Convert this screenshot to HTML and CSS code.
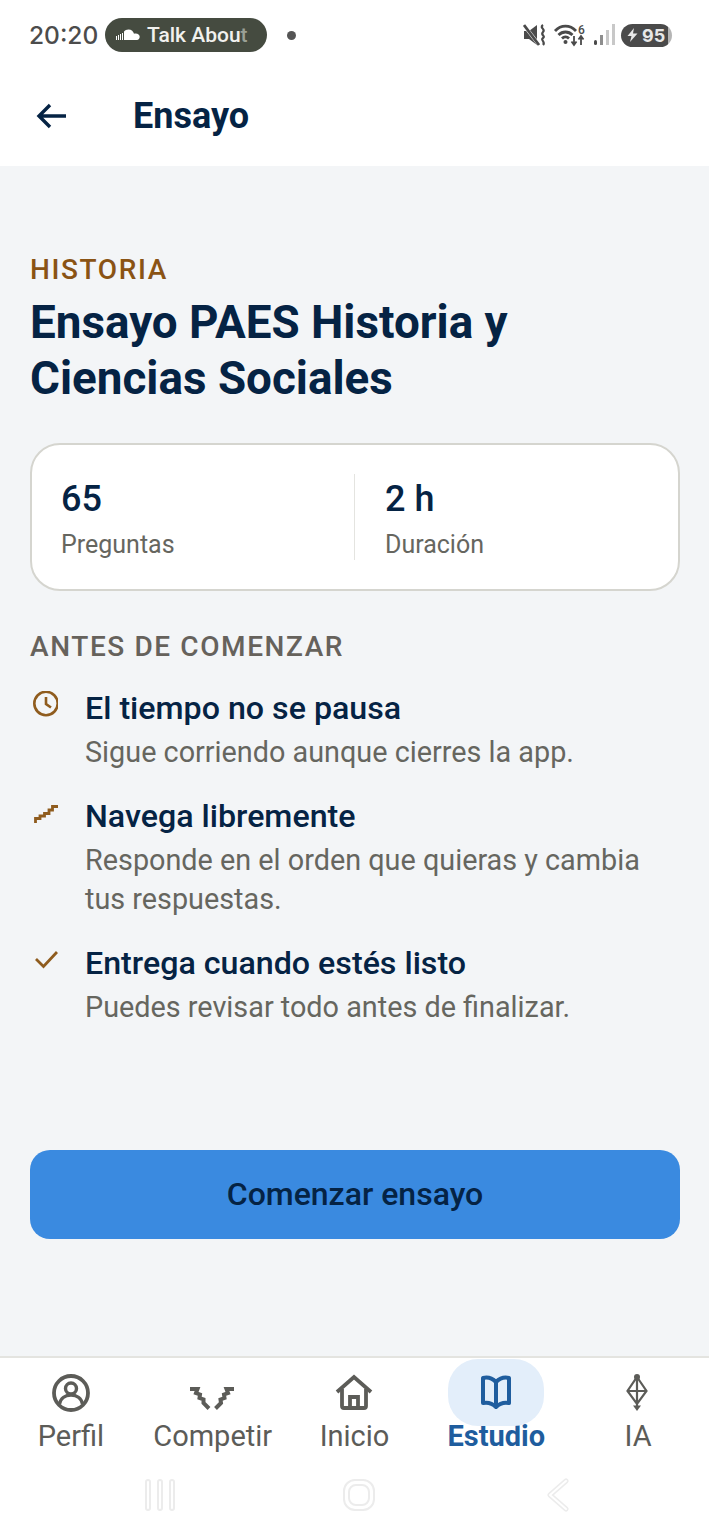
FILE: index.html
```html
<!DOCTYPE html>
<html lang="es">
<head>
<meta charset="utf-8">
<title>Ensayo</title>
<link rel="stylesheet" href="styles.css">
</head>
<body>
<div class="screen">
  <div class="statusbar">
    <div class="status-left">
      <span class="clock">20:20</span>
      <span class="pill">
        <svg class="sc-icon" viewBox="0 0 26 12"><g fill="none" stroke="#fff" stroke-width="1"><path d="M1.500 7v4M3.500 6v5M5.500 5v6M7.500 4v7"/></g><path d="M9 11V2.500C10 1.200 11.500.5 13.500.5c3 0 5 2 5.500 4.300.5-.3 1-.4 1.700-.4 2.300 0 4 1.500 4 3.300S23.500 11 22 11z" fill="#fff"/></svg>
        <span class="pill-text">Talk Abou<span class="fade">t</span></span>
      </span>
      <span class="dot"></span>
    </div>
    <div class="status-right">
      <svg class="st-mute" viewBox="0 0 24 24"><path d="M1 8h5l8-6v20l-8-6H1z" fill="#4a4a4a"/><path d="M0 1l17 22" stroke="#fff" stroke-width="3.600"/><path d="M1 2l15 20" stroke="#4a4a4a" stroke-width="2.800"/><path d="M20 2c-4 3 3 4 0 7s3 4 0 6 3 4 0 7" fill="none" stroke="#4a4a4a" stroke-width="2.200"/></svg>
      <svg class="st-wifi" viewBox="0 0 32 24"><g fill="none" stroke="#4a4a4a" stroke-width="2.800"><path d="M1 8c6-6.500 15-6.500 21 0"/><path d="M4.500 12c4-4 10-4 14 0"/><path d="M8 15.500c2-2 5-2 7 0"/></g><circle cx="11.500" cy="19" r="2" fill="#4a4a4a"/><path d="M20 13v9M17.500 18.500l2.500 3.500 2.500-3.500M27 22v-9M24.500 16.500l2.500-3.500 2.500 3.500" fill="none" stroke="#4a4a4a" stroke-width="1.800"/><text x="24" y="11" class="st-six">6</text></svg>
      <svg class="st-signal" viewBox="0 0 22 24"><rect x="1" y="17" width="3" height="5" rx="1.500" fill="#4a4a4a"/><rect x="7" y="12" width="3" height="10" fill="#8e8e8e"/><rect x="13" y="7" width="3" height="15" fill="#c8c8c8"/><rect x="19" y="1" width="3" height="21" fill="#c8c8c8"/></svg>
      <span class="battery">
        <svg class="bolt" viewBox="0 0 10 14"><path d="M6.500 0L0 8h4l-1.500 6L10 5.500H5.500z" fill="#e8e8e8"/></svg>
        <span class="batt-num">95</span>
      </span>
    </div>
  </div>

  <header class="appbar">
    <svg class="back" viewBox="0 0 32 28"><path d="M30 14H3M14 3L3 14l11 11" fill="none" stroke="#052344" stroke-width="3.400"/></svg>
    <h1 class="appbar-title">Ensayo</h1>
  </header>

  <main class="main">
    <div class="eyebrow">HISTORIA</div>
    <h2 class="title">Ensayo PAES Historia y Ciencias Sociales</h2>
    <section class="card">
      <div class="stat">
        <div class="stat-num">65</div>
        <div class="stat-label">Preguntas</div>
      </div>
      <div class="stat stat-second">
        <div class="stat-num">2 h</div>
        <div class="stat-label">Duración</div>
      </div>
    </section>
    <div class="section-label">ANTES DE COMENZAR</div>
    <ul class="rules">
      <li class="rule">
        <svg class="rule-icon" viewBox="0 0 28 28"><circle cx="16" cy="12.500" r="11.700" fill="none" stroke="#8f5c1e" stroke-width="2.600"/><path d="M16 6v7l5 3.500" fill="none" stroke="#8f5c1e" stroke-width="2.600"/></svg>
        <div class="rule-body">
          <div class="rule-title">El tiempo no se pausa</div>
          <div class="rule-text">Sigue corriendo aunque cierres la app.</div>
        </div>
      </li>
      <li class="rule">
        <svg class="rule-icon" viewBox="0 0 28 28"><path d="M5.500 24v-4.500H10V17h4.500v-2.500H19V11h3.500V7.500H28" fill="none" stroke="#8f5c1e" stroke-width="2.800"/></svg>
        <div class="rule-body">
          <div class="rule-title">Navega libremente</div>
          <div class="rule-text">Responde en el orden que quieras y cambia tus respuestas.</div>
        </div>
      </li>
      <li class="rule">
        <svg class="rule-icon" viewBox="0 0 28 28"><path d="M6 13l7.500 7.500L27 6" fill="none" stroke="#8f5c1e" stroke-width="2.800"/></svg>
        <div class="rule-body">
          <div class="rule-title">Entrega cuando estés listo</div>
          <div class="rule-text">Puedes revisar todo antes de finalizar.</div>
        </div>
      </li>
    </ul>
    <button class="cta">Comenzar ensayo</button>
  </main>

  <nav class="nav">
    <div class="tabs">
      <div class="tab">
        <span class="tab-icon">
          <svg class="ico" viewBox="0 0 40 40"><circle cx="20" cy="20" r="17" fill="none" stroke="#5c5c58" stroke-width="3.800"/><circle cx="20" cy="15.500" r="5.500" fill="none" stroke="#5c5c58" stroke-width="3.400"/><path d="M8.500 31c1-6 6-9 11.500-9s10.500 3 11.500 9" fill="none" stroke="#5c5c58" stroke-width="3.400"/></svg>
        </span>
        <span class="tab-label">Perfil</span>
      </div>
      <div class="tab">
        <span class="tab-icon">
          <svg class="ico ico-wide" viewBox="0 0 46 40"><g fill="none" stroke="#5c5c58" stroke-width="4"><path d="M0 16h7.500L6 20l4 1.500-.5 3.500 4 1.500L13.500 30l5.500 5.500"/><path d="M44 16h-7.500l1.500 4-4 1.500.5 3.500-4 1.500.5 3.500-5.500 5.500"/></g></svg>
        </span>
        <span class="tab-label">Competir</span>
      </div>
      <div class="tab">
        <span class="tab-icon">
          <svg class="ico" viewBox="0 0 40 40"><path d="M3 19L20 4l17 15" fill="none" stroke="#5c5c58" stroke-width="3.800"/><path d="M8 16v17c0 1.500.5 2 2 2h20c1.500 0 2-.5 2-2V16" fill="none" stroke="#5c5c58" stroke-width="3.800"/><path d="M16 35V24h8v11" fill="none" stroke="#5c5c58" stroke-width="3.800"/></svg>
        </span>
        <span class="tab-label">Inicio</span>
      </div>
      <div class="tab tab-active">
        <span class="tab-icon">
          <span class="tab-bubble"></span>
          <svg class="ico ico-book" viewBox="0 0 40 40"><path d="M20 9C16 5 11 4 7 5v25c5-1 9 0 13 4 4-4 8-5 13-4V5c-4-1-9 0-13 4zM20 9v25" fill="none" stroke="#1f5d9e" stroke-width="4" stroke-linejoin="round"/></svg>
        </span>
        <span class="tab-label">Estudio</span>
      </div>
      <div class="tab">
        <span class="tab-icon">
          <svg class="ico" viewBox="0 0 40 40"><path d="M19 4l9.500 14L19 31 9.500 18zM9 18h20M19 4v30" fill="none" stroke="#5c5c58" stroke-width="2.200"/><circle cx="19" cy="4" r="3" fill="#5c5c58"/><path d="M15 32.500h8l-4 5.500z" fill="#5c5c58"/></svg>
        </span>
        <span class="tab-label">IA</span>
      </div>
    </div>
    <div class="sysnav">
      <svg class="sys sys-recent" viewBox="0 0 32 34"><g fill="none" stroke="#ececec" stroke-width="2"><rect x="2" y="2" width="4" height="30" rx="2"/><rect x="14" y="2" width="4" height="30" rx="2"/><rect x="26" y="2" width="4" height="30" rx="2"/></g></svg>
      <svg class="sys sys-home" viewBox="0 0 34 34"><rect x="2" y="2" width="30" height="30" rx="11" fill="none" stroke="#ececec" stroke-width="2"/><rect x="7" y="7" width="20" height="20" rx="7" fill="none" stroke="#ececec" stroke-width="2"/></svg>
      <svg class="sys sys-back" viewBox="0 0 24 34"><path d="M20 3L4 17l16 14" fill="none" stroke="#ececec" stroke-width="5" stroke-linecap="round" stroke-linejoin="round"/><path d="M20 3L4 17l16 14" fill="none" stroke="#fff" stroke-width="2" stroke-linecap="round" stroke-linejoin="round"/></svg>
    </div>
  </nav>
</div>
</body>
</html>
```
FILE: styles.css
```css
* { box-sizing: border-box; }
html, body { margin: 0; padding: 0; }
body { font-family: Roboto, "Liberation Sans", sans-serif; background: #fff; }
.screen { width: 709px; height: 1536px; display: flex; flex-direction: column; overflow: hidden; }

.statusbar { height: 70px; padding: 0 37px 0 29px; display: flex; align-items: center; justify-content: space-between; background: #fff; flex: none; }
.status-left { display: flex; align-items: center; }
.clock { font-family: Inter, Roboto, sans-serif; font-size: 24.5px; font-weight: 500; color: #4c4c4c; width: 76px; }
.pill { width: 162px; height: 34px; border-radius: 17px; background: #454b40; display: flex; align-items: center; padding-left: 10px; gap: 6px; }
.sc-icon { width: 26px; height: 12px; }
.pill-text { font-size: 21px; font-weight: 500; color: #f1f1ee; white-space: nowrap; }
.fade { color: #9aa096; }
.dot { width: 9px; height: 9px; border-radius: 50%; background: #555; margin-left: 20px; }
.status-right { display: flex; align-items: center; }
.st-mute { width: 24px; height: 24px; }
.st-wifi { width: 32px; height: 24px; margin-left: 7px; overflow: visible; }
.st-six { font-family: Roboto, sans-serif; font-size: 12px; font-weight: 500; fill: #4a4a4a; }
.st-signal { width: 22px; height: 24px; margin-left: 7px; }
.battery { width: 51px; height: 23px; border-radius: 12px; background: linear-gradient(to right, #4a4a4a 92%, #b5b5b5 92%); margin-left: 6px; display: flex; align-items: center; padding-left: 6px; gap: 4px; }
.bolt { width: 11px; height: 14px; }
.batt-num { font-family: Inter, Roboto, sans-serif; font-size: 18px; font-weight: 700; color: #e8e8e8; }

.appbar { height: 96px; display: flex; align-items: center; background: #fff; padding: 0 0 5px 36px; flex: none; }
.back { width: 32px; height: 28px; }
.appbar-title { margin: 0 0 0 65px; font-size: 36px; font-weight: 700; color: #052344; }

.main { flex: 1; background: #f3f5f7; padding: 88px 29px 0 30px; min-height: 0; }
.eyebrow { font-size: 28px; line-height: 32px; font-weight: 500; letter-spacing: 1.600px; color: #8a5314; }
.title { margin: 9px 0 0; font-size: 45.8px; line-height: 56px; font-weight: 700; color: #052344; width: 600px; }
.card { margin-top: 36px; height: 148px; background: #fff; border: 2px solid #d5d5cf; border-radius: 30px; display: flex; padding: 29px 0; }
.stat { flex: 1; padding: 3px 0 0 29px; }
.stat-second { border-left: 1px solid #e4e4e0; padding-left: 30px; }
.stat-num { font-size: 36px; line-height: 44px; font-weight: 500; color: #052344; }
.stat-label { margin-top: 9px; font-size: 25px; line-height: 30px; color: #66665f; }
.section-label { margin-top: 39px; font-size: 28px; line-height: 34px; font-weight: 500; letter-spacing: 1.600px; color: #66625c; }
.rules { list-style: none; margin: 24px 0 0; padding: 0; }
.rule { display: flex; margin-bottom: 24px; }
.rule-icon { width: 28px; height: 28px; flex: none; margin-top: 3px; margin-right: 27px; }
.rule-title { font-size: 32.2px; line-height: 40px; font-weight: 500; color: #052344; }
.rule-text { margin-top: 5px; font-size: 28.8px; line-height: 39px; color: #66665f; }
.cta { display: block; width: 100%; height: 89px; margin-top: 123px; padding: 0 0 2px; border: 0; border-radius: 20px; background: #3a8ae0; font-family: Roboto, sans-serif; font-size: 32px; font-weight: 500; color: #052344; }

.nav { height: 180px; flex: none; background: #fff; border-top: 2px solid #e4e4e0; display: flex; flex-direction: column; }
.tabs { display: flex; height: 103px; padding-top: 1px; }
.tab { display: flex; flex-direction: column; align-items: center; width: 142px; }
.tab-icon { position: relative; width: 96px; height: 67px; display: flex; align-items: center; justify-content: center; }
.tab-bubble { position: absolute; left: 0; top: 0; right: 0; bottom: 0; background: #e3eefa; border-radius: 30px; }
.ico { position: relative; width: 40px; height: 40px; }
.ico-wide { width: 46px; }
.tab-label { font-size: 29px; line-height: 20px; color: #5c5c58; white-space: nowrap; }
.tab-active .tab-label { color: #1f5d9e; font-weight: 700; }
.sysnav { flex: 1; display: flex; align-items: flex-start; padding: 17px 0 0 144px; }
.sys { height: 34px; }
.sys-recent { width: 32px; margin-right: 166px; }
.sys-home { width: 34px; margin-right: 170px; }
.sys-back { width: 24px; }
```
